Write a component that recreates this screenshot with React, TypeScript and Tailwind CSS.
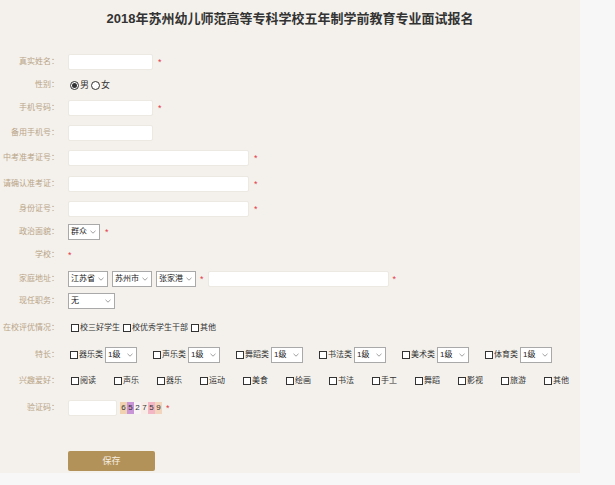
import React from 'react'

const font = { fontFamily: '"Liberation Sans", "Noto Sans CJK SC", sans-serif' }

function Label({ children }: { children: React.ReactNode }) {
  return (
    <div className="w-[60px] shrink-0 pr-[1px] text-right text-[8px] leading-none text-[#b9a487]">
      {children}
    </div>
  )
}

function Star({ className = '' }: { className?: string }) {
  return <span className={`text-[9px] leading-none text-[#e3394a] ${className}`}>*</span>
}

function Input({ w }: { w: string }) {
  return <div className={`h-[16px] ${w} rounded-[2px] border border-[#ece8e2] bg-white`} />
}

function Select({ text, w }: { text: string; w: string }) {
  return (
    <div
      className={`flex h-[16px] ${w} items-center justify-between border border-[#a9a9a9] bg-white pl-[2px] pr-[3px] text-[8px] leading-none text-[#222]`}
    >
      <span className="whitespace-nowrap">{text}</span>
      <svg width="6" height="4" viewBox="0 0 6 4" className="shrink-0 text-[#888]">
        <path d="M0.5 0.8 L3 3.2 L5.5 0.8" fill="none" stroke="currentColor" strokeWidth="0.8" />
      </svg>
    </div>
  )
}

function Box() {
  return <span className="inline-block h-[8px] w-[8px] shrink-0 border border-[#333] bg-white" />
}

function Check({ text, className = '' }: { text: string; className?: string }) {
  return (
    <div className={`flex items-center gap-[1px] text-[8px] leading-none text-[#333] ${className}`}>
      <Box />
      <span className="whitespace-nowrap">{text}</span>
    </div>
  )
}

export default function App() {
  const talents = ['器乐类', '声乐类', '舞蹈类', '书法类', '美术类', '体育类']
  const hobbies = ['阅读', '声乐', '器乐', '运动', '美食', '绘画', '书法', '手工', '舞蹈', '影视', '旅游', '其他']
  const captcha = [
    { c: '6', bg: 'bg-[#f0d2b0]' },
    { c: '5', bg: 'bg-[#c895d6]' },
    { c: '2', bg: 'bg-[#f8f4f6]' },
    { c: '7', bg: 'bg-[#f7ece6]' },
    { c: '5', bg: 'bg-[#f2b6c4]' },
    { c: '9', bg: 'bg-[#f3d4bd]' },
  ]

  return (
    <div className="h-[485px] w-[615px] bg-[#f7f7f7]" style={font}>
      <div className="h-[473px] w-[580px] bg-[#f4f1ec]">
        <h1 className="pt-[9px] text-center text-[13px] font-bold leading-[20px] text-[#333]">
          2018年苏州幼儿师范高等专科学校五年制学前教育专业面试报名
        </h1>

        <div className="flex flex-col">
          <div className="mt-[24px] flex h-[18px] items-center gap-[8px]">
            <Label>真实姓名：</Label>
            <Input w="w-[85px]" />
            <Star className="ml-[-3px]" />
          </div>

          <div className="mt-[5px] flex h-[18px] items-center gap-[8px]">
            <Label>性别：</Label>
            <div className="ml-[2px] flex items-center text-[9px] leading-none text-[#333]">
              <span className="flex h-[9px] w-[9px] items-center justify-center rounded-full border border-[#333] bg-white">
                <span className="h-[5px] w-[5px] rounded-full bg-[#333]" />
              </span>
              <span className="ml-[1px]">男</span>
              <span className="ml-[2px] h-[9px] w-[9px] rounded-full border border-[#333] bg-white" />
              <span className="ml-[1px]">女</span>
            </div>
          </div>

          <div className="mt-[5px] flex h-[18px] items-center gap-[8px]">
            <Label>手机号码：</Label>
            <Input w="w-[85px]" />
            <Star className="ml-[-3px]" />
          </div>

          <div className="mt-[7px] flex h-[18px] items-center gap-[8px]">
            <Label>备用手机号：</Label>
            <Input w="w-[85px]" />
          </div>

          <div className="mt-[7px] flex h-[18px] items-center gap-[8px]">
            <Label>中考准考证号：</Label>
            <Input w="w-[181px]" />
            <Star className="ml-[-3px]" />
          </div>

          <div className="mt-[8px] flex h-[18px] items-center gap-[8px]">
            <Label>请确认准考证：</Label>
            <Input w="w-[181px]" />
            <Star className="ml-[-3px]" />
          </div>

          <div className="mt-[7px] flex h-[18px] items-center gap-[8px]">
            <Label>身份证号：</Label>
            <Input w="w-[181px]" />
            <Star className="ml-[-3px]" />
          </div>

          <div className="mt-[5px] flex h-[18px] items-center gap-[8px]">
            <Label>政治面貌：</Label>
            <Select text="群众" w="w-[32px]" />
            <Star className="ml-[-3px]" />
          </div>

          <div className="mt-[5px] flex h-[18px] items-center gap-[8px]">
            <Label>学校：</Label>
            <Star />
          </div>

          <div className="mt-[6px] flex h-[18px] items-center gap-[8px]">
            <Label>家庭地址：</Label>
            <div className="flex items-center gap-[4px]">
              <Select text="江苏省" w="w-[40px]" />
              <Select text="苏州市" w="w-[40px]" />
              <Select text="张家港" w="w-[40px]" />
              <Star />
              <Input w="w-[181px]" />
              <Star />
            </div>
          </div>

          <div className="mt-[4px] flex h-[18px] items-center gap-[8px]">
            <Label>现任职务：</Label>
            <Select text="无" w="w-[47px]" />
          </div>

          <div className="mt-[9px] flex h-[18px] items-center gap-[11px]">
            <Label>在校评优情况：</Label>
            <div className="flex items-center gap-[3px]">
              <Check text="校三好学生" />
              <Check text="校优秀学生干部" />
              <Check text="其他" />
            </div>
          </div>

          <div className="mt-[9px] flex h-[18px] items-center gap-[10px]">
            <Label>特长：</Label>
            <div className="flex items-center">
              {talents.map((t) => (
                <div key={t} className="flex w-[83px] items-center">
                  <Check text={t} className="w-[35px]" />
                  <Select text="1级" w="w-[32px]" />
                </div>
              ))}
            </div>
          </div>

          <div className="mt-[8px] flex h-[18px] items-center gap-[11px]">
            <Label>兴趣爱好：</Label>
            <div className="flex items-center">
              {hobbies.map((h) => (
                <Check key={h} text={h} className="w-[43px]" />
              ))}
            </div>
          </div>

          <div className="mt-[9px] flex h-[18px] items-center gap-[8px]">
            <Label>验证码：</Label>
            <Input w="w-[49px]" />
            <div className="ml-[-5px] flex h-[12px] items-center">
              {captcha.map((k, i) => (
                <span
                  key={i}
                  className={`flex h-[12px] w-[7px] items-center justify-center text-[8px] leading-none text-[#333] ${k.bg}`}
                >
                  {k.c}
                </span>
              ))}
            </div>
            <Star className="ml-[-4px]" />
          </div>

          <div className="mt-[34px] flex gap-[8px]">
            <div className="w-[60px]" />
            <button className="h-[20px] w-[87px] rounded-[2px] bg-[#b3925a] text-[9px] leading-none text-[#f6efe2]">
              保存
            </button>
          </div>
        </div>
      </div>
    </div>
  )
}
